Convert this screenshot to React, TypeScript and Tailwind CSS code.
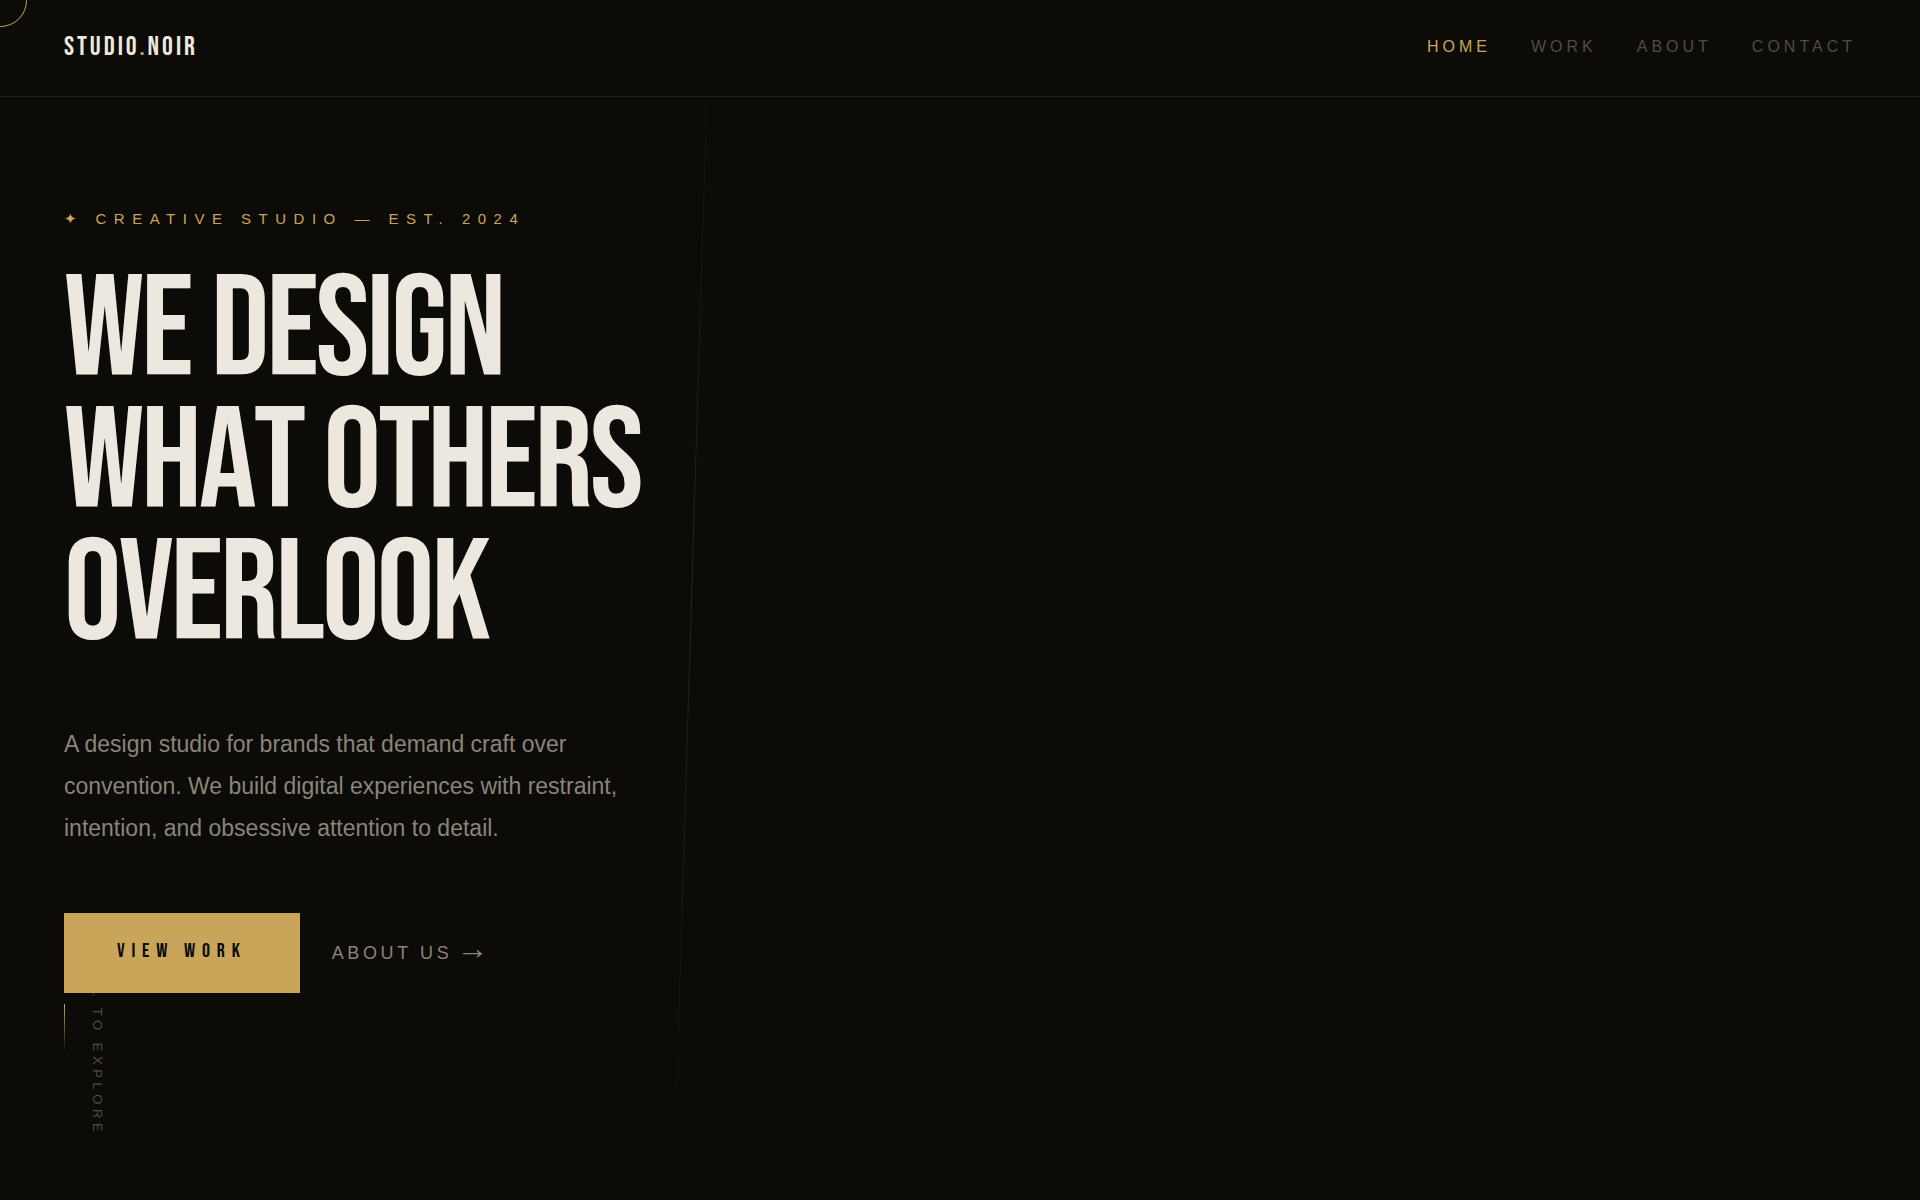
const navItems = [
  { label: 'HOME', href: '#home', active: true },
  { label: 'WORK', href: '#work', active: false },
  { label: 'ABOUT', href: '#about', active: false },
  { label: 'CONTACT', href: '#contact', active: false },
];

function Header() {
  return (
    <header className="absolute inset-x-0 top-0 z-20 flex items-center justify-between border-b border-[#22211e] bg-[#0c0b07] px-16 pt-[29px] pb-[31px]">
      <a
        href="#home"
        className="font-['Bebas_Neue','Oswald',sans-serif] text-[27px] leading-9 tracking-[3px] text-[#ede8df]"
      >
        STUDIO<span className="text-[#c9a55a]">.</span>NOIR
      </a>
      <nav className="flex gap-10 text-base tracking-[4px]">
        {navItems.map((item) => (
          <a key={item.label} href={item.href} className={item.active ? 'text-[#c9a55a]' : 'text-[#524c43]'}>
            {item.label}
          </a>
        ))}
      </nav>
    </header>
  );
}

function ScrollHint() {
  return (
    <div className="absolute bottom-16 left-16 flex items-center gap-[22px]">
      <span className="h-12 w-px bg-linear-to-b from-[#c9a55a] to-transparent" />
      <span className="text-[13px] leading-5 tracking-[0.35em] whitespace-nowrap text-[#524c43] [writing-mode:vertical-rl]">
        SCROLL TO EXPLORE
      </span>
    </div>
  );
}

function Hero() {
  return (
    <main className="relative flex min-h-screen items-center overflow-hidden px-16">
      <div className="absolute inset-y-0 left-[36%] w-px rotate-[1.75deg] bg-linear-to-b from-transparent via-[#262420] to-transparent" />
      <ScrollHint />
      <div className="relative z-10">
        <p className="flex gap-[11px] text-[15px] leading-6 tracking-[0.5em] text-[#c9a55a]">
          <span>✦</span>
          <span>CREATIVE STUDIO — EST. 2024</span>
        </p>
        <h1 className="mt-[35px] font-['Bebas_Neue','Oswald',sans-serif] text-[144px] leading-[132px] font-normal tracking-[-0.02em] text-[#ede8df] [font-kerning:none]">
          WE DESIGN
          <br />
          WHAT OTHERS
          <br />
          OVERLOOK
        </h1>
        <p className="mt-[61px] max-w-[580px] text-[23px] leading-[42px] text-[#8a847a]">
          A design studio for brands that demand craft over convention. We build digital experiences with restraint,
          intention, and obsessive attention to detail.
        </p>
        <div className="mt-16 flex items-center gap-8">
          <button
            type="button"
            className="bg-[#c9a55a] px-[53px] pt-6 pb-7 font-['Bebas_Neue','Oswald',sans-serif] text-xl leading-7 tracking-[0.34em] text-[#0c0b07]"
          >
            VIEW WORK
          </button>
          <a href="#about" className="flex items-baseline gap-1 pb-1.5 text-lg leading-7 tracking-[0.2em] text-[#8a847a]">
            ABOUT US
            <span className="text-[32px] leading-7 tracking-normal">→</span>
          </a>
        </div>
      </div>
    </main>
  );
}

export default function App() {
  return (
    <div className="relative min-h-screen overflow-hidden bg-[#0c0b07] font-['Liberation_Sans',Arial,sans-serif]">
      <Header />
      <Hero />
      <div className="pointer-events-none absolute -top-[26px] -left-[26px] z-30 size-[53px] rounded-full border border-[#c9a55a]" />
    </div>
  );
}
